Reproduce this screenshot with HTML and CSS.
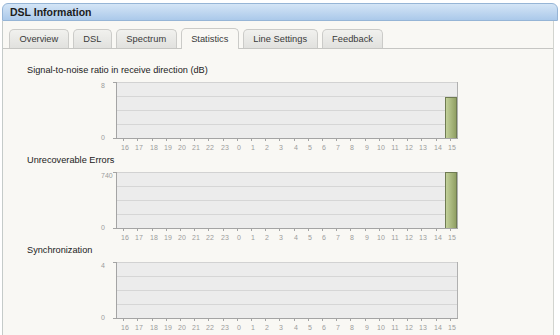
FILE: index.html
```html
<!DOCTYPE html>
<html lang="en">
<head>
    <meta charset="UTF-8">
    <meta name="viewport" content="width=device-width, initial-scale=1.0">
    <title>DSL Information</title>
    <link rel="stylesheet" href="styles.css">
</head>
<body>
    <div class="panel">
        <div class="panel-head">DSL Information</div>
        <div class="panel-body">
            <ul class="tabs">
                <li>Overview</li>
                <li>DSL</li>
                <li>Spectrum</li>
                <li class="active">Statistics</li>
                <li>Line Settings</li>
                <li>Feedback</li>
            </ul>
            <div class="tab-content">
                <div class="chart" data-max="8" data-value="5.9">
                    <div class="chart-title">Signal-to-noise ratio in receive direction (dB)</div>
                    <svg class="plot" width="440" height="78"></svg>
                </div>
                <div class="chart" data-max="740" data-value="740">
                    <div class="chart-title">Unrecoverable Errors</div>
                    <svg class="plot" width="440" height="78"></svg>
                </div>
                <div class="chart" data-max="4" data-value="0">
                    <div class="chart-title">Synchronization</div>
                    <svg class="plot" width="440" height="78"></svg>
                </div>
            </div>
        </div>
    </div>

    <script>
        const NS = 'http://www.w3.org/2000/svg';
        const hours = [16, 17, 18, 19, 20, 21, 22, 23, 0, 1, 2, 3, 4, 5, 6, 7, 8, 9, 10, 11, 12, 13, 14, 15];
        const x0 = 89, x1 = 430, y0 = 6, y1 = 62;
        const col = (x1 - x0) / hours.length;

        function el(name, attrs, parent) {
            const node = document.createElementNS(NS, name);
            for (const k in attrs) node.setAttribute(k, attrs[k]);
            parent.appendChild(node);
            return node;
        }

        function line(svg, xa, ya, xb, yb, color) {
            el('line', { x1: xa, y1: ya, x2: xb, y2: yb, stroke: color, 'shape-rendering': 'crispEdges' }, svg);
        }

        function text(svg, x, y, str, anchor) {
            const t = el('text', { x: x, y: y, 'text-anchor': anchor, class: 'tick-label' }, svg);
            t.textContent = str;
        }

        document.querySelectorAll('.chart').forEach(function(chart) {
            const svg = chart.querySelector('svg');
            const max = parseFloat(chart.dataset.max);
            const value = parseFloat(chart.dataset.value);

            const defs = el('defs', {}, svg);
            const grad = el('linearGradient', { id: 'bar-' + max, x1: 0, y1: 0, x2: 1, y2: 0 }, defs);
            el('stop', { offset: '0', 'stop-color': '#c6d49e' }, grad);
            el('stop', { offset: '1', 'stop-color': '#8f9e62' }, grad);

            el('rect', { x: x0, y: y0, width: x1 - x0, height: y1 - y0, fill: '#ececec' }, svg);
            for (let i = 1; i < 4; i++) {
                const y = y0 + i * (y1 - y0) / 4 + 0.5;
                line(svg, x0, y, x1, y, '#d6d6d6');
            }
            line(svg, x0, y0 + 0.5, x1, y0 + 0.5, '#d2d2d2');
            line(svg, x1 + 0.5, y0, x1 + 0.5, y1, '#b0b0b0');

            if (value > 0) {
                const h = Math.round(value / max * (y1 - y0));
                const bx = x0 + 23 * col + 2;
                el('rect', { x: bx + 0.5, y: y1 - h + 0.5, width: 11, height: h, fill: 'url(#bar-' + max + ')', stroke: '#6f7b52', 'shape-rendering': 'crispEdges' }, svg);
            }

            line(svg, x0 + 0.5, y0, x0 + 0.5, y1 + 1, '#a4a4a4');
            line(svg, x0, y1 + 0.5, x1 + 1, y1 + 0.5, '#a4a4a4');
            line(svg, x0 - 3, y0 + 0.5, x0, y0 + 0.5, '#a4a4a4');
            line(svg, x0 - 3, y1 + 0.5, x0, y1 + 0.5, '#a4a4a4');

            text(svg, 74, 12, String(max), 'start');
            text(svg, 74, 64, '0', 'start');

            hours.forEach(function(hr, i) {
                const cx = Math.round(x0 + (i + 0.5) * col) + 0.5;
                line(svg, cx, y1, cx, y1 + 3, '#a4a4a4');
                text(svg, cx + 1.5, 74, String(hr), 'middle');
            });
        });
    </script>
</body>
</html>
```

FILE: styles.css
```css
html {
    overflow: hidden;
}
body {
    margin: 0;
    background: #fff;
    font-family: "Liberation Sans", Arial, sans-serif;
    color: #222;
}
.panel {
    margin: 3px 2px 0 2px;
}
.panel-head {
    height: 16px;
    line-height: 16px;
    padding-left: 7px;
    border: 1px solid #96b5d6;
    border-radius: 6px 6px 0 0;
    background: linear-gradient(#d4e5f6, #abc9ea);
    font-size: 10.5px;
    font-weight: bold;
    color: #1c1c1c;
}
.panel-body {
    margin-right: 4px;
    height: 320px;
    border-left: 1px solid #c5cbc9;
    border-right: 1px solid #d2d4cf;
    background: #f9f8f4;
    overflow: hidden;
}
.tabs {
    display: flex;
    align-items: flex-end;
    gap: 4px;
    height: 19px;
    margin: 8px 0 0;
    padding: 0 0 0 6px;
    list-style: none;
    border-bottom: 1px solid #c6c6c3;
}
.tabs li {
    height: 18px;
    line-height: 18px;
    padding: 0 9.5px;
    border: 1px solid #cbcbc8;
    border-bottom: none;
    border-radius: 5px 5px 0 0;
    background: linear-gradient(#f1f1ee, #e1e1de);
    font-size: 9.3px;
    color: #3a3a3a;
}
.tabs li.active {
    height: 20px;
    line-height: 20px;
    margin-bottom: -1px;
    background: #f9f8f4;
}
.tab-content {
    padding: 15px 0 0 24px;
}
.chart-title {
    height: 12px;
    line-height: 12px;
    font-size: 9.2px;
    color: #222;
}
.plot {
    display: block;
}
.tick-label {
    font-family: "Liberation Sans", Arial, sans-serif;
    font-size: 7px;
    fill: #9c9c9c;
}
```
